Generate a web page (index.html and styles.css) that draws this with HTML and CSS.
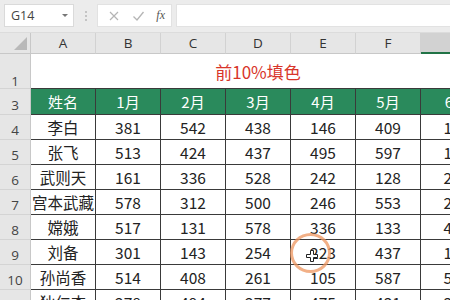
FILE: index.html
```html
<!DOCTYPE html>
<html>
<head>
<meta charset="utf-8">
<link rel="stylesheet" href="styles.css">
</head>
<body>
<div class="app">
  <div class="toolbar">
    <div class="namebox"><span>G14</span><span class="drop"></span></div>
    <div class="grip"><i></i><i></i><i></i></div>
    <div class="fxbox">
      <svg class="ico" width="12" height="12" viewBox="0 0 12 12"><path d="M2 2L10 10M10 2L2 10" stroke="#b5b5b5" stroke-width="1.2" fill="none"/></svg>
      <svg class="ico" width="13" height="12" viewBox="0 0 13 12"><path d="M1.5 6.5L5 10L11.5 2" stroke="#b5b5b5" stroke-width="1.3" fill="none"/></svg>
      <span class="fx">fx</span>
    </div>
    <div class="formula"></div>
  </div>
  <div class="sheet">
    <div class="corner"><span class="tri"></span></div>
    <div class="ch">A</div><div class="ch">B</div><div class="ch">C</div><div class="ch">D</div><div class="ch">E</div><div class="ch">F</div><div class="ch sel">G</div>

    <div class="rh tall">1</div>
    <div class="title">前10%填色</div>

    <div class="rh">3</div>
    <div class="hd">姓名</div><div class="hd">1月</div><div class="hd">2月</div><div class="hd">3月</div><div class="hd">4月</div><div class="hd">5月</div><div class="hd">6月</div>

    <div class="rh">4</div>
    <div class="c">李白</div><div class="c">381</div><div class="c">542</div><div class="c">438</div><div class="c">146</div><div class="c">409</div><div class="c">152</div>

    <div class="rh">5</div>
    <div class="c">张飞</div><div class="c">513</div><div class="c">424</div><div class="c">437</div><div class="c">495</div><div class="c">597</div><div class="c">186</div>

    <div class="rh">6</div>
    <div class="c">武则天</div><div class="c">161</div><div class="c">336</div><div class="c">528</div><div class="c">242</div><div class="c">128</div><div class="c">257</div>

    <div class="rh">7</div>
    <div class="c">宫本武藏</div><div class="c">578</div><div class="c">312</div><div class="c">500</div><div class="c">246</div><div class="c">553</div><div class="c">214</div>

    <div class="rh">8</div>
    <div class="c">嫦娥</div><div class="c">517</div><div class="c">131</div><div class="c">578</div><div class="c">336</div><div class="c">133</div><div class="c">463</div>

    <div class="rh">9</div>
    <div class="c">刘备</div><div class="c">301</div><div class="c">143</div><div class="c">254</div><div class="c">223</div><div class="c">437</div><div class="c">175</div>

    <div class="rh">10</div>
    <div class="c">孙尚香</div><div class="c">514</div><div class="c">408</div><div class="c">261</div><div class="c">105</div><div class="c">587</div><div class="c">529</div>

    <div class="rh">11</div>
    <div class="c">狄仁杰</div><div class="c">278</div><div class="c">494</div><div class="c">277</div><div class="c">475</div><div class="c">431</div><div class="c">348</div>
  </div>
  <div class="cursor-ring"></div>
  <svg class="cursor" width="12" height="12" viewBox="0 0 12 12"><path d="M4.5 0.5H7.5V4.5H11.5V7.5H7.5V11.5H4.5V7.5H0.5V4.5H4.5Z" fill="#fff" stroke="#222" stroke-width="1"/></svg>
</div>
</body>
</html>
```
FILE: styles.css
```css
* { box-sizing: border-box; }
html, body { margin: 0; padding: 0; }
body { width: 450px; height: 300px; overflow: hidden; background: #fff; font-family: "Noto Sans CJK SC", "Noto Sans", sans-serif; }
.app { position: relative; width: 450px; height: 300px; overflow: hidden; }

.toolbar { height: 33px; background: #ececec; display: flex; align-items: flex-start; padding: 4px 0 0 4px; border-bottom: 1px solid #dcdcdc; }
.namebox { width: 70px; height: 23px; background: #fff; border: 1px solid #dadada; display: flex; align-items: center; justify-content: space-between; padding: 0 5px 0 6px; font-family: "Open Sans", "Noto Sans", sans-serif; font-size: 12.5px; color: #444; }
.drop { width: 0; height: 0; border-left: 3px solid transparent; border-right: 3px solid transparent; border-top: 3px solid #777; }
.grip { width: 23px; height: 23px; display: flex; flex-direction: column; align-items: center; justify-content: center; gap: 2px; }
.grip i { display: block; width: 2px; height: 2px; background: #c4c4c4; }
.fxbox { width: 75px; height: 23px; background: #fff; border: 1px solid #e2e2e2; display: flex; align-items: center; justify-content: space-between; padding: 0 6px 0 10px; }
.fx { font-family: "Liberation Serif", serif; font-style: italic; font-size: 12px; color: #555; }
.formula { flex: 1; height: 23px; margin-left: 4px; background: #fff; border: 1px solid #e2e2e2; border-right: none; }

.sheet { display: grid; grid-template-columns: 31px repeat(6, 65px) 72px; grid-template-rows: 21px 35px 26px repeat(8, 25px); width: 493px; }

.corner { background: #e6e6e6; border-right: 1px solid #c8c8c8; border-bottom: 1px solid #c8c8c8; position: relative; }
.tri { position: absolute; right: 3px; bottom: 3px; width: 0; height: 0; border-left: 13px solid transparent; border-bottom: 13px solid #b9b9b9; }
.ch { background: #e6e6e6; border-right: 1px solid #d2d2d2; border-bottom: 1px solid #c8c8c8; display: flex; align-items: center; justify-content: center; font-family: "Open Sans", "Noto Sans", sans-serif; font-size: 13.5px; color: #333; }
.ch.sel { background: #d2d2d2; border-bottom: 2px solid #217346; }

.rh { background: #e6e6e6; border-right: 1px solid #c8c8c8; border-bottom: 1px solid #d4d4d4; display: flex; align-items: flex-end; justify-content: center; padding-bottom: 2px; line-height: 1; font-family: "Open Sans", "Noto Sans", sans-serif; font-size: 13.5px; color: #444; }
.rh.tall { padding-bottom: 0; }

.title { grid-column: 2 / span 7; display: flex; align-items: flex-end; justify-content: center; padding: 0 8px 4px 0; color: #d8352a; font-size: 17px; border-bottom: 1px solid #3a3a3a; }

.hd { background: #2a8a5c; color: #fff; font-size: 15px; display: flex; align-items: center; justify-content: center; border-right: 1px solid #3a3a3a; border-bottom: 1px solid #3a3a3a; }
.c { color: #222; font-size: 15.5px; display: flex; align-items: center; justify-content: center; border-right: 1px solid #3a3a3a; border-bottom: 1px solid #3a3a3a; }

.cursor-ring { position: absolute; left: 290px; top: 233px; width: 41px; height: 40px; border-radius: 50%; border: 3px solid rgba(238, 150, 95, 0.75); }
.cursor { position: absolute; left: 306px; top: 250px; }
```
